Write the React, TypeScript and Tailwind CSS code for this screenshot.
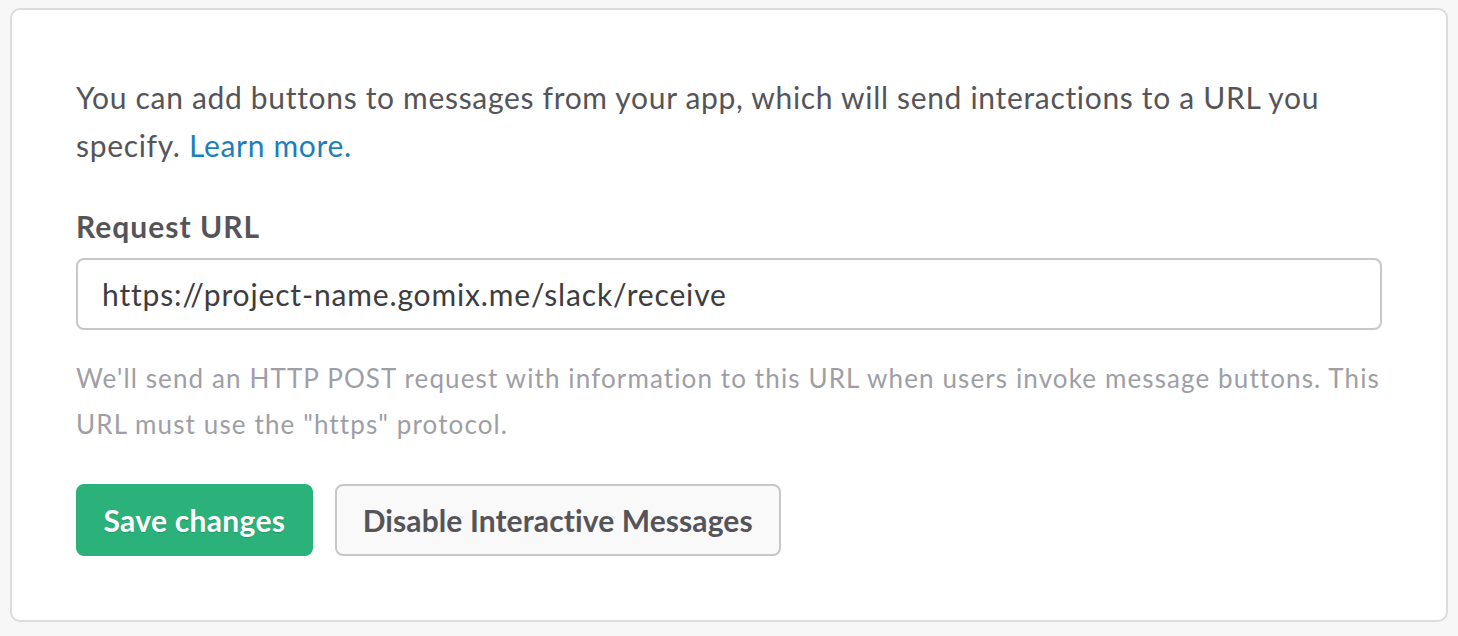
import React from 'react';

const font = { fontFamily: 'Lato, "Noto Sans", sans-serif' };

export default function App() {
  return (
    <div className="min-h-screen bg-[#f7f7f7] px-[10px] pt-[8px] pb-[15px]" style={font}>
      {/* Card */}
      <div className="rounded-[10px] border-2 border-[#dcdcdc] bg-white px-[64px] pt-[63px] pb-[64px]">
        <p className="text-[30px] leading-[48px] tracking-[0.68px] text-[#555459]">
          You can add buttons to messages from your app, which will send interactions to a URL you specify.{' '}
          <a href="#" className="text-[#1d7fba]">
            Learn more.
          </a>
        </p>

        {/* Request URL field */}
        <label className="mt-[39px] block text-[30px] font-bold leading-[36px] tracking-[1px] text-[#555459]">
          Request URL
        </label>
        <div className="mt-[14px] flex h-[72px] items-center rounded-[8px] border-2 border-[#c7c7c7] px-[24px] text-[30px] tracking-[0.85px] text-[#3d3c40]">
          https://project-name.gomix.me/slack/receive
        </div>
        <p className="mt-[25px] text-[26px] leading-[46px] tracking-[1.12px] text-[#9e9ea6]">
          We'll send an HTTP POST request with information to this URL when users invoke message buttons. This URL must
          use the "https" protocol.
        </p>

        {/* Actions */}
        <div className="mt-[37px] flex gap-[22px]">
          <button className="h-[72px] rounded-[8px] border-2 border-[#2bb27b] bg-[#2bb27b] px-[25.5px] text-[30px] font-bold tracking-[0.3px] text-white [text-shadow:0_1px_1px_rgba(0,0,0,0.15)]">
            Save changes
          </button>
          <button className="h-[72px] rounded-[8px] border-2 border-[#c7c7c7] bg-[#f9f9f9] px-[26px] text-[30px] font-bold tracking-[0.1px] text-[#555459]">
            Disable Interactive Messages
          </button>
        </div>
      </div>
    </div>
  );
}
